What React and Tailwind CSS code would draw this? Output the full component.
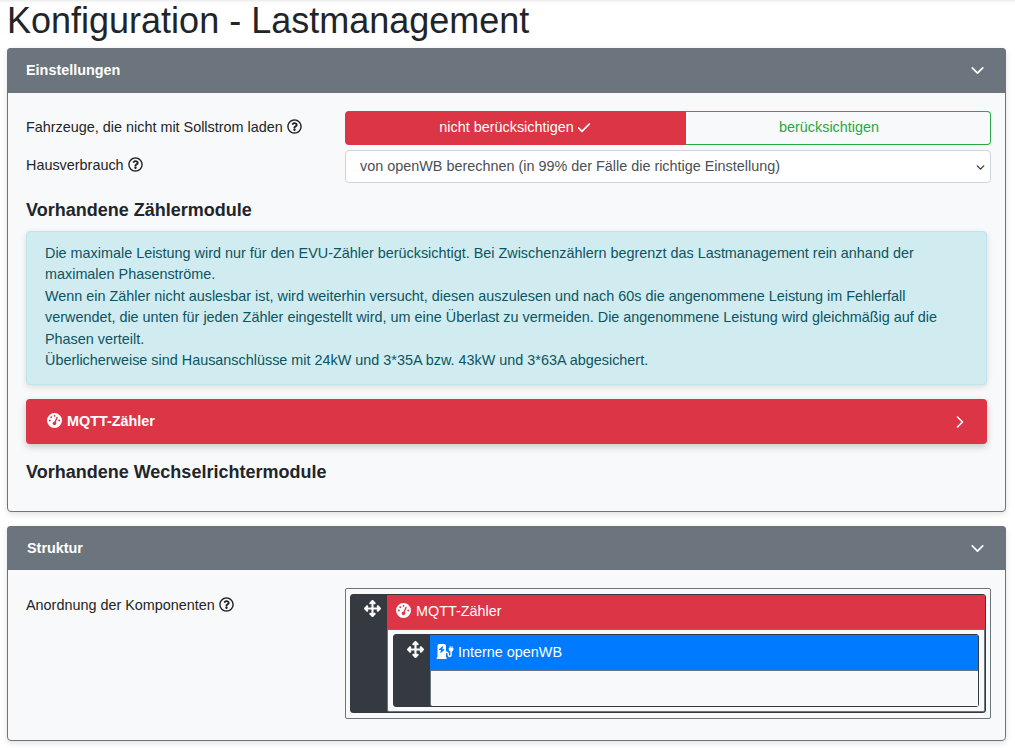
import React from "react";
import { FaRegQuestionCircle } from "react-icons/fa";
import { FaGaugeHigh, FaArrowsUpDownLeftRight, FaChargingStation } from "react-icons/fa6";
import { ChevronDown, ChevronRight, Check } from "lucide-react";

const Help = () => <FaRegQuestionCircle className="inline-block w-[15px] h-[15px] ml-1 align-[-2px] text-[#212529]" />;

function Card({ title, className, headClass, bodyClass, children }) {
  return (
    <section className={"ml-[7px] mr-[9px] rounded-[4px] border border-[#6c757d] bg-[#f8f9fa] shadow-[0_2px_6px_rgba(0,0,0,0.12)] " + className}>
      <header className={"flex items-center justify-between -mx-px -mt-px rounded-t-[4px] bg-[#6c757d] pr-[18px] text-[#ffffff] " + headClass}>
        <span className="text-[14.4px] font-bold">{title}</span>
        <ChevronDown className="w-[21px] h-[21px]" strokeWidth={2} />
      </header>
      <div className={bodyClass}>{children}</div>
    </section>
  );
}

function Nested({ inner, color, gripClass, iconPad, icon, label, children }) {
  return (
    <div className={"flex rounded-[3px] bg-[#343a40] " + inner}>
      <div className={"w-[36px] shrink-0 flex justify-center pl-[6px] text-white " + gripClass}>
        <FaArrowsUpDownLeftRight className="w-[17px] h-[17px]" />
      </div>
      <div className="flex-1 flex flex-col min-w-0">
        <div className={"flex items-center h-[35px] text-white text-[14.4px] " + iconPad + " " + color}>
          {icon}
          <span>{label}</span>
        </div>
        {children}
      </div>
    </div>
  );
}

export default function App() {
  return (
    <div className="w-[1015px] h-[748px] overflow-hidden bg-white text-[#212529] text-[14.4px] font-['Liberation_Sans',Arial,sans-serif] relative">
      <div className="absolute top-0 inset-x-0 h-[3px] bg-gradient-to-b from-[#ececec] to-white" />
      <h1 className="h-[48px] pl-[7px] pt-[1px] text-[36px] leading-[40px] font-normal">Konfiguration - Lastmanagement</h1>

      <Card title="Einstellungen" className="h-[464px]" headClass="h-[45px] pl-[19px]" bodyClass="pl-[18px] pr-[18px] pt-[18px]">
        <div className="flex items-start h-[39px] -mr-[4px]">
          <label className="w-[319px] leading-[32px]">Fahrzeuge, die nicht mit Sollstrom laden<Help /></label>
          <div className="flex-1 flex h-[34px]">
            <div className="w-[341px] flex items-center justify-center rounded-l-[4px] bg-[#dc3545] text-white">
              nicht berücksichtigen<Check className="w-[16px] h-[16px] ml-[2px]" strokeWidth={2.6} />
            </div>
            <div className="flex-1 flex items-center justify-center pr-[18px] rounded-r-[4px] border border-l-0 border-[#28a745] text-[#28a745]">berücksichtigen</div>
          </div>
        </div>
        <div className="flex items-start h-[33px] -mr-[4px]">
          <label className="w-[319px] leading-[30px]">Hausverbrauch<Help /></label>
          <div className="flex-1 relative h-[33px] flex items-center pl-[14px] rounded-[4px] border border-[#ced4da] bg-white text-[#495057]">
            von openWB berechnen (in 99% der Fälle die richtige Einstellung)
            <ChevronDown className="absolute right-[3px] top-[10px] w-[13px] h-[13px] text-[#343a40]" strokeWidth={2.5} />
          </div>
        </div>
        <h2 className="mt-[16px] h-[32px] text-[18px] leading-[22px] font-bold">Vorhandene Zählermodule</h2>
        <div className="h-[154px] rounded-[4px] border border-[#bee5eb] bg-[#d1ecf1] text-[#0c5460] px-[18px] pt-[11px] leading-[21.4px] shadow-[0_2px_6px_rgba(0,0,0,0.12)]">
          Die maximale Leistung wird nur für den EVU-Zähler berücksichtigt. Bei Zwischenzählern begrenzt das Lastmanagement rein anhand der maximalen Phasenströme.<br />
          Wenn ein Zähler nicht auslesbar ist, wird weiterhin versucht, diesen auszulesen und nach 60s die angenommene Leistung im Fehlerfall verwendet, die unten für jeden Zähler eingestellt wird, um eine Überlast zu vermeiden. Die angenommene Leistung wird gleichmäßig auf die Phasen verteilt.<br />
          Überlicherweise sind Hausanschlüsse mit 24kW und 3*35A bzw. 43kW und 3*63A abgesichert.
        </div>
        <div className="mt-[14px] flex items-center justify-between h-[45px] rounded-[4px] bg-[#dc3545] text-white pl-[21px] pr-[17px] shadow-[0_3px_7px_rgba(0,0,0,0.2)]">
          <span className="flex items-center text-[14.4px] font-bold">
            <FaGaugeHigh className="w-[15px] h-[15px] mr-[5px] -mt-[2px]" />MQTT-Zähler
          </span>
          <ChevronRight className="w-[20px] h-[20px]" strokeWidth={2} />
        </div>
        <h2 className="mt-[17px] text-[18px] leading-[22px] font-bold">Vorhandene Wechselrichtermodule</h2>
      </Card>

      <Card title="Struktur" className="mt-[14px] h-[215px]" headClass="h-[44px] pl-[20px] pt-[1px]" bodyClass="pl-[18px] pr-[14px] pt-[18px]">
        <div className="flex items-start">
          <label className="w-[319px] leading-[34px]">Anordnung der Komponenten<Help /></label>
          <div className="flex-1 h-[131px] rounded-[2px] border border-[#6c757d] pl-[4px] pr-[4px] py-[5px]">
            <Nested
              inner="h-[119px] border border-[#343a40]"
              color="bg-[#dc3545]"
              gripClass="pt-[5px]"
              iconPad="pl-[9px]"
              icon={<FaGaugeHigh className="w-[15px] h-[15px] mr-[5px] -mt-[3px]" />}
              label="MQTT-Zähler"
            >
              <div className="flex-1 bg-[#f8f9fa] border border-[#6c757d] rounded-b-[2px] px-[5px] pt-[4px] pb-[4px]">
                <Nested
                  inner="h-[73px] border border-[#343a40]"
                  color="bg-[#007bff]"
                  gripClass="pt-[6px]"
                  iconPad="pl-[6px]"
                  icon={<FaChargingStation className="w-[18px] h-[15px] mr-[4px] -mt-[2px]" />}
                  label="Interne openWB"
                >
                  <div className="flex-1 bg-[#f8f9fa] border-t border-l border-[#6c757d] rounded-bl-[2px]" />
                </Nested>
              </div>
            </Nested>
          </div>
        </div>
      </Card>
    </div>
  );
}
